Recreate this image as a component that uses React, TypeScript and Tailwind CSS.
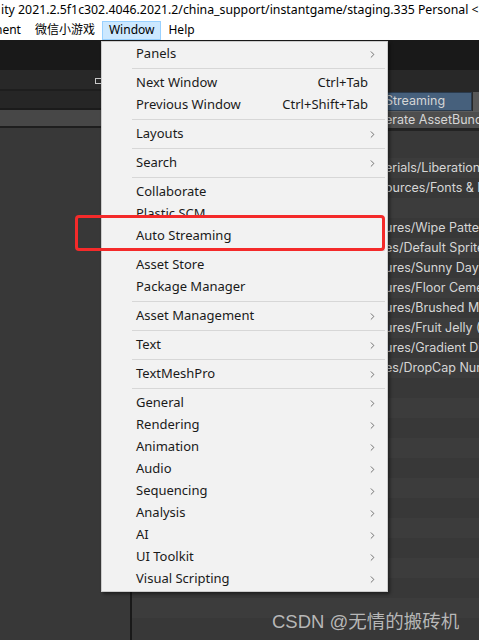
import { ChevronRight } from "lucide-react";

type Item = { label: string; shortcut?: string; sub?: boolean } | "sep";

const menuItems: Item[] = [
  { label: "Panels", sub: true },
  "sep",
  { label: "Next Window", shortcut: "Ctrl+Tab" },
  { label: "Previous Window", shortcut: "Ctrl+Shift+Tab" },
  "sep",
  { label: "Layouts", sub: true },
  "sep",
  { label: "Search", sub: true },
  "sep",
  { label: "Collaborate" },
  { label: "Plastic SCM" },
  { label: "Auto Streaming" },
  "sep",
  { label: "Asset Store" },
  { label: "Package Manager" },
  "sep",
  { label: "Asset Management", sub: true },
  "sep",
  { label: "Text", sub: true },
  "sep",
  { label: "TextMeshPro", sub: true },
  "sep",
  { label: "General", sub: true },
  { label: "Rendering", sub: true },
  { label: "Animation", sub: true },
  { label: "Audio", sub: true },
  { label: "Sequencing", sub: true },
  { label: "Analysis", sub: true },
  { label: "AI", sub: true },
  { label: "UI Toolkit", sub: true },
  { label: "Visual Scripting", sub: true },
];

const rows = [
  "erials/LiberationSans SDF",
  "ources/Fonts & Materials",
  "",
  "ures/Wipe Pattern",
  "es/Default Sprite",
  "ures/Sunny Days",
  "ures/Floor Cement",
  "ures/Brushed Metal",
  "ures/Fruit Jelly (B)",
  "ures/Gradient Diagonal",
  "es/DropCap Numbers",
  "",
  "",
  "",
  "",
  "",
  "",
  "",
  "",
  "",
  "",
  "",
  "",
];

function WindowMenu() {
  return (
    <div className="absolute left-[101px] top-[41px] w-[287px] bg-[#f2f2f2] border border-[#cccccc] shadow-[2px_2px_3px_rgba(0,0,0,0.45)] py-[1px] text-[13px] text-[#1a1a1a]">
      {menuItems.map((item, i) =>
        item === "sep" ? (
          <div key={i} className="h-[7px] flex items-center pl-[30px] pr-[2px]">
            <div className="h-px w-full bg-[#d7d7d7]" />
          </div>
        ) : (
          <div key={i} className="h-[22px] flex items-center pl-[34px] pr-[9px]">
            <span className="flex-1 whitespace-nowrap">{item.label}</span>
            {item.shortcut && (
              <span className="whitespace-nowrap mr-[10px]">{item.shortcut}</span>
            )}
            {item.sub && (
              <ChevronRight className="w-[11px] h-[11px] text-[#444]" strokeWidth={1.6} />
            )}
          </div>
        )
      )}
    </div>
  );
}

function App() {
  return (
    <div className="relative w-[479px] h-[640px] overflow-hidden bg-[#383838] font-['Noto_Sans','Noto_Sans_CJK_SC',sans-serif]">
      <div className="h-[20px] bg-white text-[12.3px] leading-[20px] text-black whitespace-nowrap overflow-hidden pl-[1px]">
        ity 2021.2.5f1c302.4046.2021.2/china_support/instantgame/staging.335 Personal &lt;DX11&gt;
      </div>
      <div className="h-[20px] bg-white flex items-center text-[12px] text-black whitespace-nowrap overflow-hidden">
        <span className="ml-[-5px]">nent</span>
        <span className="ml-[14px]">微信小游戏</span>
        <span className="ml-[7px] h-[19px] px-[6px] flex items-center bg-[#cce8ff] border border-[#99d1ff]">
          Window
        </span>
        <span className="ml-[7px]">Help</span>
      </div>
      <div className="h-[30px] bg-[#191919]" />
      <div className="flex h-[570px]">
        <div className="w-[130px] shrink-0 flex flex-col">
          <div className="h-[19px] bg-[#282828] flex items-center justify-end pr-[28px]">
            <div className="w-[7px] h-[6px] border border-[#c8c8c8] mt-[3px]" />
          </div>
          <div className="h-[2px] bg-[#1e1e1e]" />
          <div className="h-[17px] bg-[#262626]" />
          <div className="h-[2px] bg-[#1b1b1b]" />
          <div className="h-[16px] bg-[#474747]" />
          <div className="h-[2px] bg-[#1e1e1e]" />
          <div className="flex-1 bg-[#383838]" />
        </div>
        <div className="w-[2px] shrink-0 bg-[#191919]" />
        <div className="flex-1 min-w-0 overflow-hidden flex flex-col text-[12.5px] text-[#d6d6d6] font-['Inter',sans-serif]">
          <div className="h-[22px] shrink-0 bg-[#282828]" />
          <div className="h-[19px] shrink-0 bg-[#282828] flex">
            <div className="flex-1 min-w-0 bg-[#46607c] border border-[#2a3a4c] flex items-center pl-[252px] whitespace-nowrap overflow-hidden">
              Streaming
            </div>
            <div className="w-[6px] bg-[#585858] ml-[1px]" />
          </div>
          <div className="h-[17px] shrink-0 bg-[#4e4e4e] border-t border-[#5c5c5c] flex items-center pl-[253px] whitespace-nowrap">
            erate AssetBundles
          </div>
          <div className="h-[3px] shrink-0 bg-[#232323]" />
          <div className="h-[27px] shrink-0 bg-[#383838]" />
          {rows.map((r, i) => (
            <div
              key={i}
              className={`h-[20px] shrink-0 flex items-center pl-[253px] whitespace-nowrap overflow-hidden ${
                i % 2 === 0 ? "bg-[#3c3c3c]" : "bg-[#383838]"
              }`}
            >
              {r}
            </div>
          ))}
        </div>
      </div>

      <WindowMenu />

      <div className="absolute left-[75px] top-[215px] w-[310px] h-[36px] border-[3px] border-[#f42a2a] rounded-[4px]" />

      <div className="absolute left-[272px] top-[608px] text-[18.5px] text-[#cfcfcf]/85 whitespace-nowrap font-['Liberation_Sans','Noto_Sans_CJK_SC',sans-serif]">
        CSDN @无情的搬砖机
      </div>
    </div>
  );
}

export default App;
